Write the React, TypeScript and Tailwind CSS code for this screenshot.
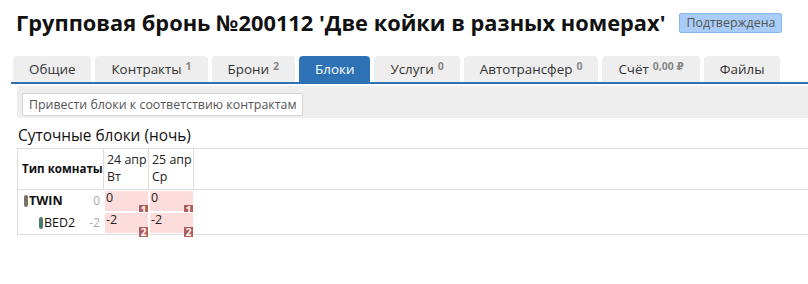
import React from "react"

// ---------------------------------------------------------------------------
// Group booking — blocks tab
// ---------------------------------------------------------------------------

type Tab = { label: string; count?: string; active?: boolean }

const tabs: Tab[] = [
  { label: "Общие" },
  { label: "Контракты", count: "1" },
  { label: "Брони", count: "2" },
  { label: "Блоки", active: true },
  { label: "Услуги", count: "0" },
  { label: "Автотрансфер", count: "0" },
  { label: "Счёт", count: "0,00 ₽" },
  { label: "Файлы" },
]

const days = [
  { date: "24 апр", dow: "Вт" },
  { date: "25 апр", dow: "Ср" },
]

const rows = [
  { name: "TWIN", total: "0", value: "0", badge: "1", pill: "bg-[#7b7266]", bold: true, indent: false },
  { name: "BED2", total: "-2", value: "-2", badge: "2", pill: "bg-[#4e7a6c]", bold: false, indent: true },
]

function Badge({ n }: { n: string }) {
  return (
    <span className="flex h-[10px] w-[9px] items-center justify-center bg-[#b35d5d] text-[10px] font-bold leading-none text-white">
      {n}
    </span>
  )
}

export default function App() {
  return (
    <div
      className="h-[284px] w-[808px] overflow-hidden bg-white text-[#222]"
      style={{ fontFamily: "'Open Sans', 'DejaVu Sans', sans-serif" }}
    >
      {/* header */}
      <div className="mt-[8px] flex h-[30px] items-center gap-[14px] pl-[16px]">
        <h1 className="whitespace-nowrap text-[21.8px] font-bold leading-[30px] text-[#111]">
          Групповая бронь №200112 'Две койки в разных номерах'
        </h1>
        <span className="rounded-[2px] border border-[#86b9f0] bg-[#a9cdf8] px-[6px] text-[12.4px] leading-[18px] text-[#555]">
          Подтверждена
        </span>
      </div>

      {/* tabs */}
      <div className="ml-[11px] mt-[18px] flex h-[28px] items-end gap-[4px] border-b-2 border-[#2d72b4] pl-[2px]">
        {tabs.map((t) => (
          <div
            key={t.label}
            className={
              "flex h-[26px] items-center rounded-t-[4px] px-[16px] text-[13.4px] " +
              (t.active ? "bg-[#2d72b4] text-white" : "bg-[#eeeeee] text-[#333]")
            }
          >
            {t.label}
            {t.count && (
              <span className="mb-[5px] ml-[4px] text-[10.5px] font-bold leading-none text-[#888]">
                {t.count}
              </span>
            )}
          </div>
        ))}
      </div>

      {/* actions */}
      <div className="ml-[17px] mt-[2px] h-[32px] bg-[#eeeeee] pl-[5px] pt-[5px]">
        <button className="h-[23px] rounded-[2px] border border-[#d4d4d4] bg-white px-[6px] text-[12.4px] leading-[21px] text-[#555]">
          Привести блоки к соответствию контрактам
        </button>
      </div>

      {/* daily blocks */}
      <h2 className="ml-[18px] mt-[8px] text-[15.4px] leading-[20px] text-[#111]">Суточные блоки (ночь)</h2>

      <div className="ml-[17px] mt-[2px] border-b border-l border-t border-[#dddddd]">
        <div className="flex h-[41px] border-b border-[#dddddd]">
          <div className="flex w-[86px] items-center whitespace-nowrap border-r border-[#dddddd] pl-[4px] text-[11.6px] font-bold text-[#111]">
            Тип комнаты
          </div>
          {days.map((d) => (
            <div key={d.date} className="w-[45px] border-r border-[#dddddd] pl-[3px] pt-[2px] text-[12.4px] leading-[17px] text-[#222]">
              <div>{d.date}</div>
              <div>{d.dow}</div>
            </div>
          ))}
        </div>

        {rows.map((r) => (
          <div key={r.name} className="flex h-[22px]">
            <div className={"flex w-[86px] items-center pr-[4px] " + (r.indent ? "pl-[21px]" : "pl-[6px]")}>
              <span className={"mr-[1px] h-[12px] w-[4px] rounded-[2px] " + r.pill} />
              <span className={"text-[12.5px] text-[#111] " + (r.bold ? "font-bold" : "")}>{r.name}</span>
              <span className="ml-auto text-[12px] text-[#aaa]">{r.total}</span>
            </div>
            {days.map((d) => (
              <div
                key={d.date}
                className="flex w-[45px] flex-col justify-between border border-white bg-[#fddcdc] pl-[1px] text-[12.5px] leading-[14px] text-[#222]"
              >
                <span>{r.value}</span>
                <span className="self-end">
                  <Badge n={r.badge} />
                </span>
              </div>
            ))}
          </div>
        ))}
      </div>
    </div>
  )
}
